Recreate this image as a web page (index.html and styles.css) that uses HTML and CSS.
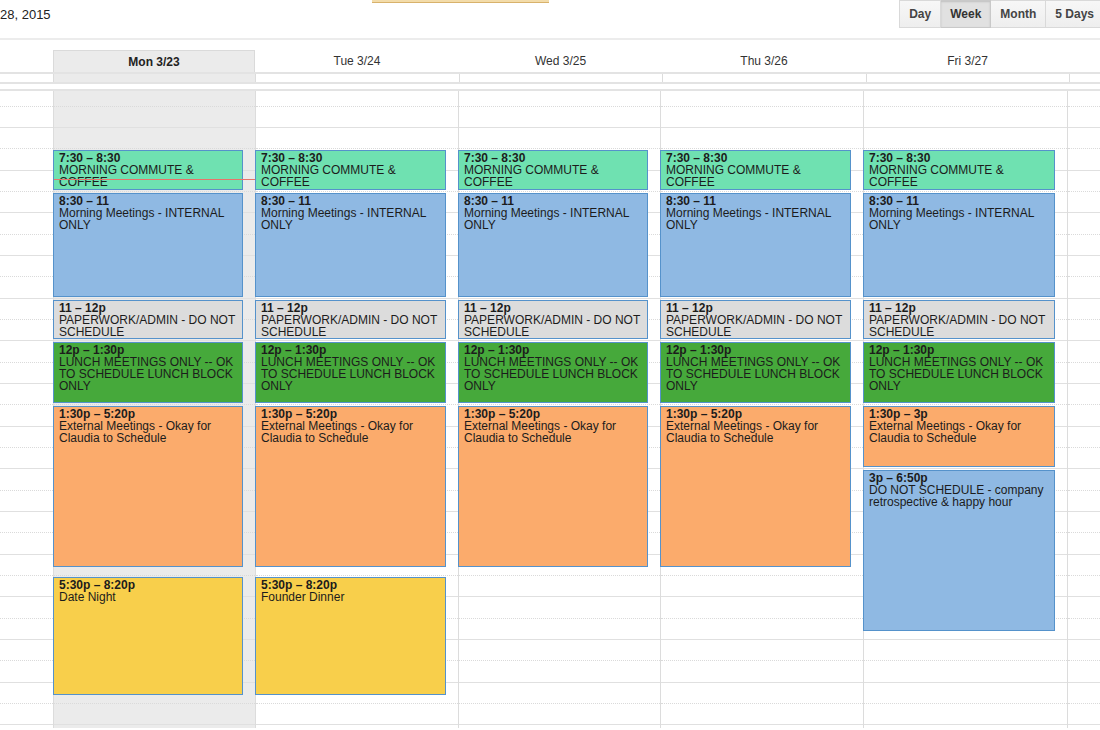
FILE: index.html
```html
<!DOCTYPE html>
<html>
<head>
    <title>Week</title>
    <link rel="stylesheet" href="styles.css">
</head>
<body>
    <div class="toolbar">
        <div class="range">28, 2015</div>
        <div class="notice"></div>
        <div class="views">
            <div class="view">Day</div>
            <div class="view active">Week</div>
            <div class="view">Month</div>
            <div class="view">5 Days</div>
        </div>
    </div>

    <div class="head">
        <div></div>
        <div class="day-name today">Mon 3/23</div>
        <div class="day-name">Tue 3/24</div>
        <div class="day-name">Wed 3/25</div>
        <div class="day-name">Thu 3/26</div>
        <div class="day-name">Fri 3/27</div>
        <div></div>
    </div>

    <div class="allday">
        <div></div>
        <div class="allday-cell today"></div>
        <div class="allday-cell"></div>
        <div class="allday-cell"></div>
        <div class="allday-cell"></div>
        <div class="allday-cell"></div>
        <div class="allday-cell"></div>
    </div>

    <div class="grid">
        <div class="week" id="week">
            <div class="col gutter"></div>
            <div class="col day today"></div>
            <div class="col day"></div>
            <div class="col day"></div>
            <div class="col day"></div>
            <div class="col day"></div>
            <div class="col filler"></div>
        </div>
    </div>

    <script>
        var HOUR = 128 / 3; // pixels per hour
        var START = 6;      // first hour in the grid
        var SLOTS = 31;     // half hour rows
        var NOW = 8.2;      // current time, for the red line

        // [start, end, time label, title, colour]
        var workday = [
            [7.5, 8.5, '7:30 \u2013 8:30', 'MORNING COMMUTE & COFFEE', 'commute'],
            [8.5, 11, '8:30 \u2013 11', 'Morning Meetings - INTERNAL ONLY', 'internal'],
            [11, 12, '11 \u2013 12p', 'PAPERWORK/ADMIN - DO NOT SCHEDULE', 'admin'],
            [12, 13.5, '12p \u2013 1:30p', 'LUNCH MEETINGS ONLY -- OK TO SCHEDULE LUNCH BLOCK ONLY', 'lunch']
        ];
        var external = [13.5, 17 + 20 / 60, '1:30p \u2013 5:20p', 'External Meetings - Okay for Claudia to Schedule', 'external'];

        var week = [
            workday.concat([external, [17.5, 20 + 20 / 60, '5:30p \u2013 8:20p', 'Date Night', 'evening']]),
            workday.concat([external, [17.5, 20 + 20 / 60, '5:30p \u2013 8:20p', 'Founder Dinner', 'evening']]),
            workday.concat([external]),
            workday.concat([external]),
            workday.concat([
                [13.5, 15, '1:30p \u2013 3p', 'External Meetings - Okay for Claudia to Schedule', 'external'],
                [15, 18 + 50 / 60, '3p \u2013 6:50p', 'DO NOT SCHEDULE - company retrospective & happy hour', 'internal']
            ])
        ];

        // Draw the half hour rows in every column
        var cols = document.querySelectorAll('#week .col');
        for (var c = 0; c < cols.length; c++) {
            for (var s = 0; s < SLOTS; s++) {
                var slot = document.createElement('div');
                slot.className = s % 2 ? 'slot hour' : 'slot';
                cols[c].appendChild(slot);
            }
        }

        // Put the events in the day columns
        var days = document.querySelectorAll('#week .day');
        for (var d = 0; d < days.length; d++) {
            for (var i = 0; i < week[d].length; i++) {
                var e = week[d][i];
                var el = document.createElement('div');
                el.className = 'event ' + e[4];
                el.style.top = ((e[0] - START) * HOUR + 1) + 'px';
                el.style.height = ((e[1] - e[0]) * HOUR - 3) + 'px';

                var time = document.createElement('b');
                time.textContent = e[2];
                var title = document.createElement('span');
                title.textContent = e[3];
                el.appendChild(time);
                el.appendChild(title);
                days[d].appendChild(el);
            }
        }

        // Red line for the current time
        var now = document.createElement('div');
        now.className = 'now';
        now.style.top = ((NOW - START) * HOUR) + 'px';
        document.querySelector('#week .today').appendChild(now);
    </script>
</body>
</html>
```

FILE: styles.css
```css
* {
    box-sizing: border-box;
}

body {
    margin: 0;
    height: 730px;
    overflow: hidden;
    font-family: "Liberation Sans", Arial, sans-serif;
    color: #222;
    background-color: #fff;
}

.toolbar {
    position: relative;
    display: flex;
    align-items: flex-start;
    height: 40px;
    border-bottom: 2px solid #ececec;
}

.range {
    font-size: 13px;
    line-height: 30px;
}

/* loading message hanging from the top edge */
.notice {
    position: absolute;
    left: 372px;
    top: 0;
    width: 177px;
    height: 3px;
    background-color: #f3dcaa;
    border-bottom: 1px solid #d8b26c;
}

.views {
    display: flex;
    margin-left: auto;
    margin-right: -4px;
}

.view {
    height: 28px;
    line-height: 26px;
    padding: 0 9px;
    font-size: 12px;
    font-weight: bold;
    color: #444;
    background: linear-gradient(#f7f7f7, #eeeeee);
    border: 1px solid #d9d9d9;
    border-left: 0;
}

.view:first-child {
    border-left: 1px solid #d9d9d9;
}

.view.active {
    background: #e1e1e1;
    border-color: #c9c9c9;
    box-shadow: inset 0 1px 2px rgba(0, 0, 0, 0.15);
    color: #333;
}

.head,
.allday {
    display: grid;
    grid-template-columns: 53px 202px 204px 203px 204px 203px 1fr;
}

.head {
    padding-top: 10px;
}

.day-name {
    height: 22px;
    line-height: 22px;
    text-align: center;
    font-size: 12px;
    color: #333;
}

.day-name.today {
    background-color: #ebebeb;
    border: 1px solid #dadada;
    border-bottom: 0;
    font-weight: bold;
    color: #222;
}

.allday {
    height: 12px;
    margin-bottom: 5px;
    border-top: 2px solid #e3e3e3;
    border-bottom: 2px solid #e3e3e3;
}

.allday-cell {
    border-left: 1px solid #dcdcdc;
}

.allday-cell.today {
    background-color: #ebebeb;
}

.grid {
    height: 639px;
    overflow: hidden;
    border-top: 2px solid #e3e3e3;
}

.week {
    display: grid;
    grid-template-columns: 53px 202px 203px 202px 203px 204px 1fr;
    margin-top: -5.67px;
}

.col {
    position: relative;
}

.day,
.filler {
    border-left: 1px solid #dcdcdc;
}

.day.today {
    background-color: #ebebeb;
}

.slot {
    height: 21.333px;
    border-bottom: 1px dotted #dadada;
}

.slot.hour {
    border-bottom: 1px solid #e0e0e0;
}

.event {
    position: absolute;
    left: -1px;
    right: 12px;
    padding: 1px 2px 0 5px;
    overflow: hidden;
    border: 1px solid #5592cb;
    font-size: 12px;
    line-height: 12px;
    color: #1c1c1c;
}

.event b {
    display: block;
}

.commute {
    background-color: #6fe1b1;
}

.internal {
    background-color: #8fb9e3;
}

.admin {
    background-color: #dcdcdc;
}

.lunch {
    background-color: #46a93b;
}

.external {
    background-color: #fbab6c;
}

.evening {
    background-color: #f8cf4b;
}

.now {
    position: absolute;
    left: 0;
    right: 0;
    height: 1px;
    background-color: #e8746a;
    z-index: 2;
}
```
